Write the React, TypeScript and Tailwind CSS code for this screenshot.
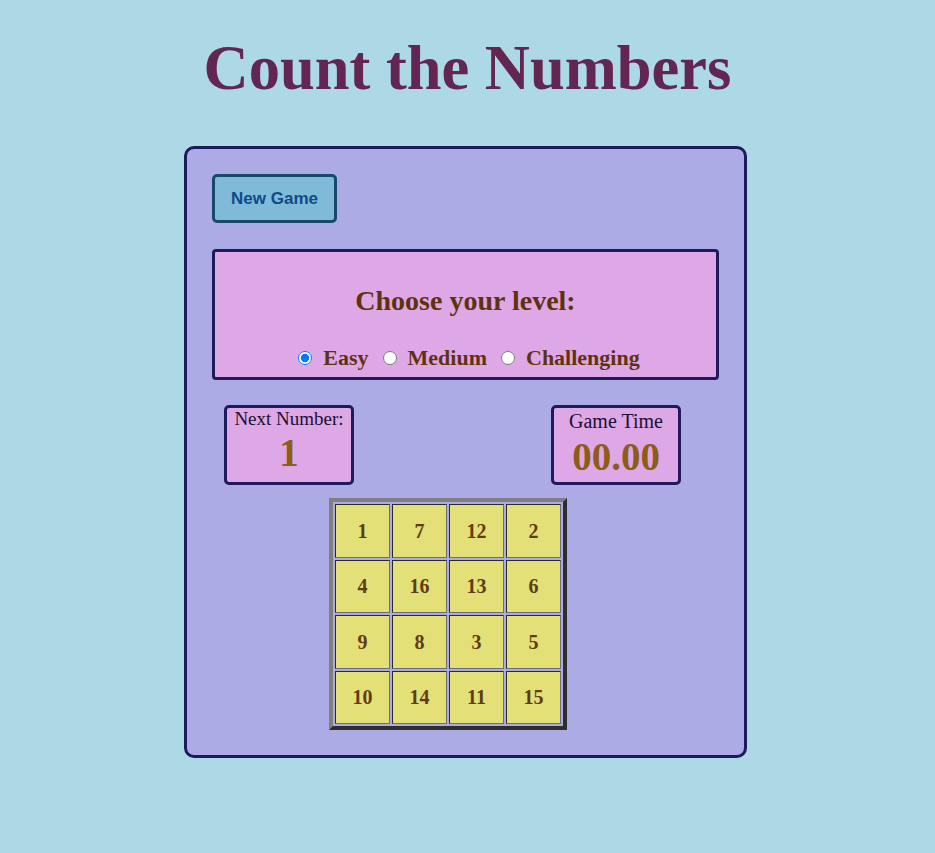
import React from "react";

const grid = [
  [1, 7, 12, 2],
  [4, 16, 13, 6],
  [9, 8, 3, 5],
  [10, 14, 11, 15],
];

export default function App() {
  return (
    <div className="min-h-screen bg-[#add8e6] font-['Liberation_Serif',serif] pt-[32px] pb-[96px]">
      <h1 className="text-center text-[62.5px] leading-[72px] font-bold text-[#632552]">
        Count the Numbers
      </h1>
      <div className="ml-[184px] mt-[42px] w-[563px] border-[3px] border-[#1e1a5c] rounded-[10px] bg-[#acabe6] p-[25px]">
        <button className="block w-[125px] h-[49px] border-[3px] border-[#17496b] rounded-[5px] bg-[#80bad9] text-[#0e4a88] font-bold text-[17px] font-['Liberation_Sans',sans-serif]">
          New Game
        </button>
        <div className="mt-[26px] h-[131px] border-[3px] border-[#1e1a5c] rounded-[4px] bg-[#dea8e6] pt-[33px]">
          <div className="text-center text-[28px] leading-[32px] font-bold text-[#5e3210]">
            Choose your level:
          </div>
          <div className="mt-[28px] flex items-center justify-center pl-[7px] text-[22px] leading-[25px] font-bold text-[#5e3210]">
            <input type="radio" name="level" defaultChecked className="m-0 mr-[11px] w-[14px] h-[14px]" />
            <span className="mr-[14px]">Easy</span>
            <input type="radio" name="level" className="m-0 mr-[11px] w-[14px] h-[14px]" />
            <span className="mr-[14px]">Medium</span>
            <input type="radio" name="level" className="m-0 mr-[11px] w-[14px] h-[14px]" />
            <span>Challenging</span>
          </div>
        </div>
        <div className="mt-[25px] flex">
          <div className="ml-[12px] w-[130px] h-[80px] border-[3px] border-[#1e1a5c] rounded-[5px] bg-[#dea8e6] text-center">
            <div className="text-[19px] leading-[22px] text-[#1a1030]">Next Number:</div>
            <div className="text-[39px] leading-[45px] font-bold text-[#8c5c1a]">1</div>
          </div>
          <div className="ml-[197px] w-[130px] h-[80px] border-[3px] border-[#1e1a5c] rounded-[5px] bg-[#dea8e6] text-center pt-[2px]">
            <div className="text-[20px] leading-[23px] text-[#1a1030]">Game Time</div>
            <div className="mt-[1px] text-[39px] leading-[45px] font-bold text-[#8c5c1a]">00.00</div>
          </div>
        </div>
        <div className="mt-[13px] ml-[117px] inline-grid grid-cols-[repeat(4,55px)] gap-[2px] p-[2px] border-[4px] border-t-[#808080] border-l-[#808080] border-b-[#2e2e2e] border-r-[#2e2e2e]">
          {grid.flat().map((n) => (
            <div
              key={n}
              className="h-[53.5px] flex items-center justify-center bg-[#e3e077] border border-t-[#2a2a2a] border-l-[#2a2a2a] border-b-[#6e6e78] border-r-[#6e6e78] text-[20px] font-bold text-[#603c14]"
            >
              {n}
            </div>
          ))}
        </div>
      </div>
    </div>
  );
}
